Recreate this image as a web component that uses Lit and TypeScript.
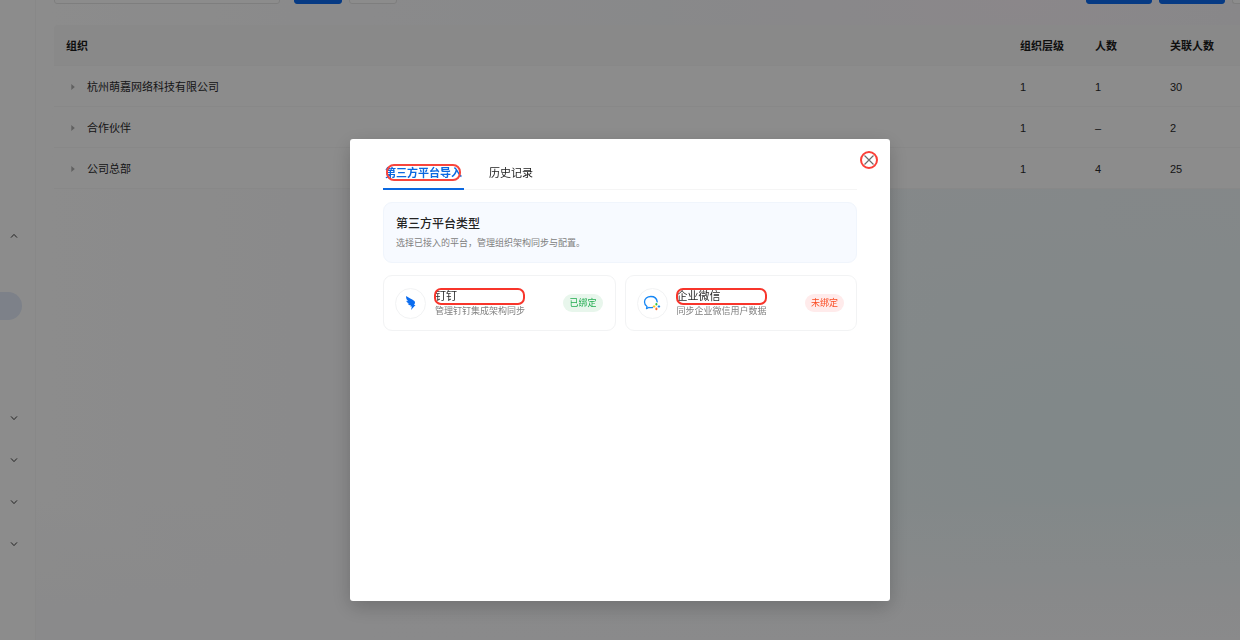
import { LitElement, html, css, svg } from "lit";
import { customElement, property, state } from "lit/decorators.js";

interface OrgRow {
  name: string;
  level: string;
  people: string;
  linked: string;
}

const ROWS: OrgRow[] = [
  { name: "杭州萌嘉网络科技有限公司", level: "1", people: "1", linked: "30" },
  { name: "合作伙伴", level: "1", people: "–", linked: "2" },
  { name: "公司总部", level: "1", people: "4", linked: "25" },
];

const chevron = (up: boolean) => html`
  <svg width="8" height="8" viewBox="0 0 8 8" fill="none" stroke="currentColor" stroke-width="1">
    ${up ? svg`<path d="M1 5.600 4 2.400 7 5.600" />` : svg`<path d="M1 2.400 4 5.600 7 2.400" />`}
  </svg>
`;

const dingtalkIcon = html`
  <svg width="14" height="16" viewBox="0 0 14 16" fill="#0a6cf0">
    <path
      d="M2.200 1C4.600 2.900 8 4 10 5.800c1 .8 1.200 1.600.8 2.600L10 10h1.500L7 15l.9-3.400H6.300l.6-1.300c-1.700-.1-2.800-.7-3.200-1.900l1.900.1C3.700 8 2.500 7 2.300 5.700l2 .6C2.700 5 1.800 3.200 2.200 1z"
    />
  </svg>
`;

const wecomIcon = html`
  <svg width="18" height="16" viewBox="0 0 18 16" fill="none" stroke-linecap="round" stroke-linejoin="round">
    <path
      d="M14.200 6.800C13.800 3.600 11.200 1.500 7.900 1.500 4.200 1.500 1.500 3.900 1.500 7c0 1.900 1 3.500 2.500 4.500L3.500 13.600l2.300-1.100c1.300.3 2.500.3 3.700 0"
      stroke="#1687f5"
      stroke-width="1.300"
    />
    <path d="M13.400 9v.6" stroke="#2fc13e" stroke-width="2" />
    <path d="M15.600 11.600h.6" stroke="#1687f5" stroke-width="2" />
    <path d="M13.400 13.600v.6" stroke="#fb6a2c" stroke-width="2" />
    <path d="M10.800 11.600h.6" stroke="#fbc41c" stroke-width="2" />
  </svg>
`;

@customElement("side-nav")
export class SideNav extends LitElement {
  static styles = css`
    :host {
      display: block;
      box-sizing: border-box;
      width: 36px;
      flex: none;
      padding-top: 215px;
      background: #ffffff;
      border-right: 1px solid #f7f7f7;
    }
    .group {
      display: flex;
      align-items: center;
      width: 100%;
      height: 42px;
      padding: 0 0 0 10px;
      border: 0;
      background: none;
      color: #404040;
    }
    .items {
      padding: 35px 0 77px;
    }
    .active {
      display: block;
      width: 22px;
      height: 28px;
      border-radius: 0 14px 14px 0;
      background: #e3ebfa;
    }
  `;

  render() {
    return html`
      <nav>
        <button class="group" aria-expanded="true">${chevron(true)}</button>
        <div class="items"><a class="active" href="#"></a></div>
        ${[0, 1, 2, 3].map(() => html`<button class="group" aria-expanded="false">${chevron(false)}</button>`)}
      </nav>
    `;
  }
}

@customElement("org-table")
export class OrgTable extends LitElement {
  static styles = css`
    :host {
      display: block;
    }
    .table {
      width: 100%;
      table-layout: fixed;
      border-collapse: separate;
      border-spacing: 0;
      font-size: 11px;
      line-height: 16px;
      color: #2a2a2c;
      background: #ffffff;
      border-radius: 4px 0 0 0;
    }
    .narrow {
      width: 75px;
    }
    .edge {
      width: 7px;
    }
    th,
    td {
      box-sizing: border-box;
      height: 41px;
      padding: 1px 12px 0;
      text-align: left;
      border-bottom: 1px solid #f8f8f8;
    }
    th {
      background: #f9f9f9;
      font-weight: 700;
      color: #1c1c1c;
    }
    th:first-child {
      border-top-left-radius: 4px;
    }
    .last {
      padding: 0;
    }
    .name {
      display: flex;
      align-items: center;
      gap: 8px;
    }
    .expand {
      display: flex;
      align-items: center;
      justify-content: center;
      width: 13px;
      height: 16px;
      padding: 0;
      border: 0;
      background: none;
      color: #b0b0b0;
    }
  `;

  render() {
    return html`
      <table class="table">
        <thead>
          <tr>
            <th>组织</th>
            <th class="narrow">组织层级</th>
            <th class="narrow">人数</th>
            <th class="narrow">关联人数</th>
            <th class="edge last"></th>
          </tr>
        </thead>
        <tbody>
          ${ROWS.map(
            (r) => html`
              <tr>
                <td>
                  <div class="name">
                    <button class="expand" aria-label="${r.name}">
                      <svg width="4" height="6" viewBox="0 0 4 6" fill="currentColor"><path d="M.3 0 3.800 3 .3 6z" /></svg>
                    </button>
                    <span>${r.name}</span>
                  </div>
                </td>
                <td>${r.level}</td>
                <td>${r.people}</td>
                <td>${r.linked}</td>
                <td class="last"></td>
              </tr>
            `
          )}
        </tbody>
      </table>
    `;
  }
}

@customElement("platform-card")
export class PlatformCard extends LitElement {
  @property() name = "";
  @property() note = "";
  @property() status = "";
  @property({ type: Boolean }) bound = false;
  @property({ attribute: false }) icon: unknown = null;

  static styles = css`
    :host {
      display: block;
    }
    .card {
      display: flex;
      align-items: center;
      gap: 9px;
      box-sizing: border-box;
      height: 56px;
      padding: 0 12px 0 11px;
      border: 1px solid #f2f3f4;
      border-radius: 9px;
      background: #ffffff;
    }
    .logo {
      display: flex;
      align-items: center;
      justify-content: center;
      box-sizing: border-box;
      width: 31px;
      height: 31px;
      flex: none;
      border: 1px solid #f2f3f4;
      border-radius: 50%;
    }
    .text {
      flex: 1;
      min-width: 0;
    }
    .body {
      display: inline-block;
    }
    .name {
      position: relative;
      font-size: 11px;
      line-height: 15px;
      color: #2a2a2a;
    }
    .mark {
      position: absolute;
      inset: -1px 0 -1px -1px;
      border: 2px solid #f8352b;
      border-radius: 7px;
    }
    .note {
      font-size: 9px;
      line-height: 14px;
      color: #808080;
    }
    .badge {
      padding: 0 6px;
      border-radius: 9px;
      font-size: 9px;
      line-height: 18px;
      color: #fa4b22;
      background: #ffebeb;
    }
    .bound {
      color: #21ac50;
      background: #e8f6ec;
    }
  `;

  render() {
    return html`
      <div class="card">
        <div class="logo">${this.icon}</div>
        <div class="text">
          <div class="body">
            <div class="name">${this.name}<span class="mark"></span></div>
            <div class="note">${this.note}</div>
          </div>
        </div>
        <span class="badge ${this.bound ? "bound" : ""}">${this.status}</span>
      </div>
    `;
  }
}

@customElement("import-dialog")
export class ImportDialog extends LitElement {
  @state() private tab = 0;

  static styles = css`
    :host {
      display: block;
      position: relative;
      box-sizing: border-box;
      width: 540px;
      max-width: 100%;
      min-height: 462px;
      padding: 18px 33px;
      border-radius: 3px;
      background: #ffffff;
      box-shadow: 0 6px 20px rgba(0, 0, 0, 0.2);
    }
    .close {
      position: absolute;
      top: 12px;
      right: 12px;
      display: flex;
      align-items: center;
      justify-content: center;
      box-sizing: border-box;
      width: 18px;
      height: 18px;
      padding: 0;
      border: 2px solid #fb4038;
      border-radius: 50%;
      background: none;
      color: #6c6c6c;
    }
    .tabs {
      display: flex;
      gap: 22px;
      border-bottom: 1px solid #f5f5f5;
    }
    .tab {
      box-sizing: border-box;
      height: 33px;
      margin-bottom: -1px;
      padding: 1px 3px 0;
      border: 0;
      border-bottom: 2px solid transparent;
      background: none;
      font: inherit;
      font-size: 11px;
      line-height: 16px;
      color: #222222;
    }
    .on {
      padding: 1px 2px 0;
      font-weight: 700;
      color: #0b68e0;
      border-bottom-color: #0b68e0;
    }
    .label {
      position: relative;
      display: block;
    }
    .mark {
      position: absolute;
      inset: -1px 1px 0;
      border: 2px solid #f8453c;
      border-radius: 8px;
    }
    .intro {
      margin: 12px 0;
      padding: 12px;
      border: 1px solid #f0f5fc;
      border-radius: 9px;
      background: #f7faff;
    }
    .title {
      margin: 0;
      font-size: 12px;
      line-height: 19px;
      font-weight: 500;
      color: #242424;
    }
    .desc {
      margin: 3px 0 0;
      font-size: 9px;
      line-height: 13px;
      color: #808080;
    }
    .cards {
      display: grid;
      grid-template-columns: 1fr 1fr;
      gap: 9px;
    }
  `;

  render() {
    const names = ["第三方平台导入", "历史记录"];
    return html`
      <button class="close" aria-label="关闭">
        <svg width="12" height="12" viewBox="0 0 12 12" fill="none" stroke="currentColor" stroke-width="1.2">
          <path d="M1.500 1.500 10.500 10.500M10.500 1.500 1.500 10.500" />
        </svg>
      </button>
      <div class="tabs" role="tablist">
        ${names.map(
          (name, i) => html`
            <button
              class="tab ${this.tab === i ? "on" : ""}"
              role="tab"
              aria-selected="${this.tab === i}"
              @click=${() => (this.tab = i)}
            >
              <span class="label">${name}${i === 0 ? html`<span class="mark"></span>` : ""}</span>
            </button>
          `
        )}
      </div>
      <section class="intro">
        <h2 class="title">第三方平台类型</h2>
        <p class="desc">选择已接入的平台，管理组织架构同步与配置。</p>
      </section>
      <div class="cards">
        <platform-card name="钉钉" note="管理钉钉集成架构同步" status="已绑定" bound .icon=${dingtalkIcon}></platform-card>
        <platform-card name="企业微信" note="同步企业微信用户数据" status="未绑定" .icon=${wecomIcon}></platform-card>
      </div>
    `;
  }
}

@customElement("app-root")
export class AppRoot extends LitElement {
  static styles = css`
    :host {
      display: block;
      font-family: "Liberation Sans", "Noto Sans CJK SC", sans-serif;
    }
    .page {
      display: flex;
      height: 100vh;
      overflow: hidden;
      background: linear-gradient(0deg, #fbfbfd, rgba(251, 251, 253, 0) 22%),
        radial-gradient(ellipse 30% 30% at 82% 0%, #fdf6fb, transparent),
        radial-gradient(ellipse 60% 60% at 88% 68%, #ebf8f9, transparent),
        linear-gradient(90deg, #ffffff 4%, #fbfbfd 30%, #f5f8fb 76%, #f3f6f9);
    }
    .main {
      flex: 1;
      min-width: 0;
      padding-left: 18px;
    }
    .toolbar {
      display: flex;
      align-items: flex-end;
      gap: 7px;
      height: 4px;
      margin-bottom: 21px;
      overflow: hidden;
    }
    .search,
    .btn {
      box-sizing: border-box;
      height: 24px;
      flex: none;
      padding: 0;
      border: 1px solid #e6e6e6;
      border-radius: 3px;
      background: #ffffff;
    }
    .search {
      width: 226px;
      margin-right: 7px;
    }
    .btn {
      width: 48px;
    }
    .primary {
      border-color: #0b6bf0;
      background: #0b6bf0;
    }
    .wide {
      width: 66px;
    }
    .push {
      margin-left: auto;
    }
    .more {
      width: 8px;
      border-right: 0;
      border-radius: 3px 0 0 3px;
    }
    .mask {
      position: fixed;
      inset: 0;
      display: flex;
      align-items: flex-start;
      justify-content: center;
      padding-top: 139px;
      background: rgba(0, 0, 0, 0.45);
    }
  `;

  render() {
    return html`
      <div class="page">
        <side-nav></side-nav>
        <main class="main">
          <div class="toolbar">
            <input class="search" type="text" aria-label="组织" />
            <button class="btn primary"></button>
            <button class="btn"></button>
            <button class="btn primary wide push"></button>
            <button class="btn primary wide"></button>
            <button class="btn more"></button>
          </div>
          <org-table></org-table>
        </main>
      </div>
      <div class="mask">
        <import-dialog role="dialog" aria-modal="true"></import-dialog>
      </div>
    `;
  }
}
